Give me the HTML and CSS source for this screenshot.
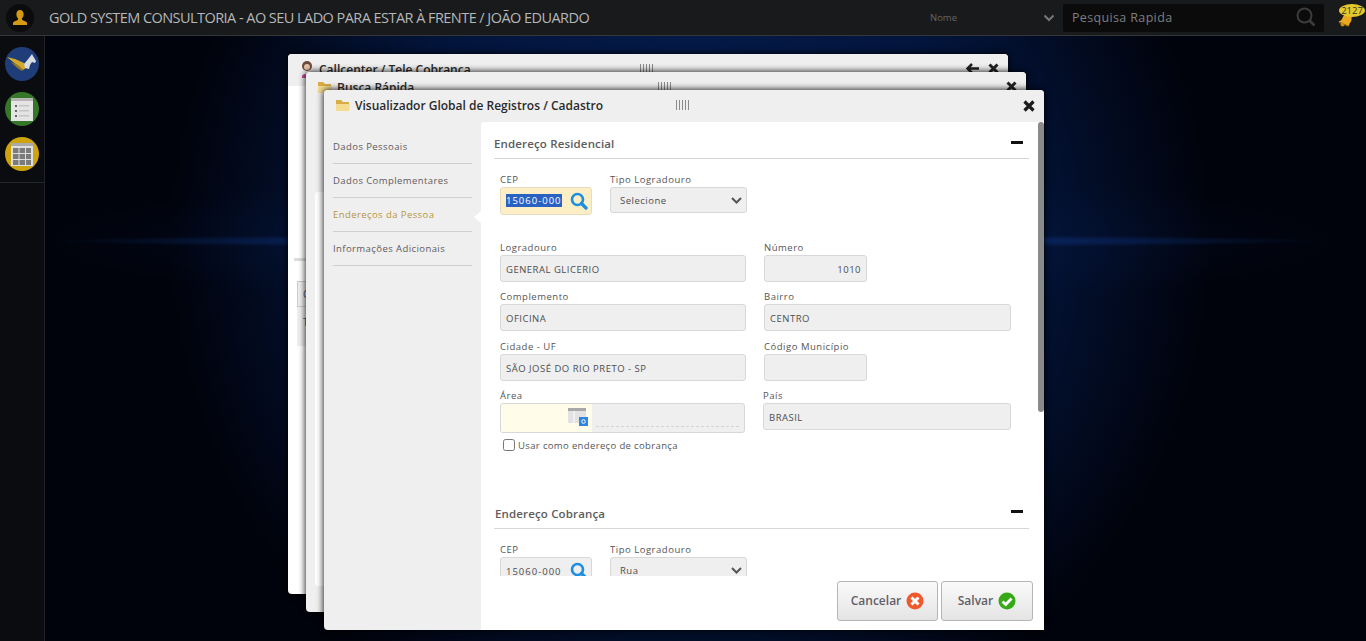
FILE: index.html
```html
<!DOCTYPE html>
<html>
<head>
    <meta http-equiv="Content-Type" content="text/html; charset=UTF-8">
    <title>Gold System</title>
    <link rel="stylesheet" href="styles.css">
</head>
<body>
<div class="topbar">
    <div class="avatar">
        <svg width="28" height="28" viewBox="0 0 28 28"><path d="M14 6c-2.400 0-3.600 2-3.600 4.200 0 1.800.7 3.200 1.600 4.200v1.400c-1.400 1-4 1.400-5 2.800v2.400h14v-2.400c-1-1.400-3.600-1.800-5-2.800v-1.400c.9-1 1.600-2.400 1.600-4.200C17.600 8 16.400 6 14 6z" fill="#d49a12"/></svg>
    </div>
    <div class="brand">GOLD SYSTEM CONSULTORIA - AO SEU LADO PARA ESTAR À FRENTE / JOÃO EDUARDO</div>
    <div class="filter">
        <span>Nome</span>
        <svg width="12" height="8" viewBox="0 0 12 8"><path d="M1.500 1.500 6 6l4.500-4.500" fill="none" stroke="#777" stroke-width="2"/></svg>
    </div>
    <div class="search">
        <span>Pesquisa Rapida</span>
        <svg width="20" height="20" viewBox="0 0 20 20"><circle cx="8.500" cy="8.500" r="7" fill="none" stroke="#3c3c3c" stroke-width="2"/><path d="M13.500 13.500 18.500 18.500" stroke="#3c3c3c" stroke-width="2.600"/></svg>
    </div>
    <div class="bell">
        <svg width="16" height="15" viewBox="0 0 16 15"><path d="M9 1C6 2 5 5 4 7 3 8.500 2 9 .5 9.500L11 14c0-2 1-3 2-4.500C14 7 14 4 12 2z" fill="#eaa820"/><path d="M1 10l10 4-1 .5L1 11z" fill="#b87a10"/><circle cx="4.500" cy="12.500" r="2" fill="#c98a16"/></svg>
        <span class="count">2127</span>
    </div>
</div>

<div class="desk">
    <div class="sidebar">
        <div class="dock">
            <div class="round blue">
                <svg width="30" height="20" viewBox="0 0 30 20"><path d="M0 3l8 2 9 4 2 5-3 2C11 12 5 7 0 3z" fill="#d3a92c"/><path d="M4 8l7 3 5 5-1 1C11 15 7 11 4 8z" fill="#8f7a2a"/><path d="M17 10l5-6 3-4 1 2 3 5-1 2-3-1-2 3-1 4-4-1z" fill="#d9dde2"/></svg>
            </div>
            <div class="round green">
                <svg width="22" height="23" viewBox="0 0 22 23"><rect width="22" height="23" fill="#e4e4e4"/><rect width="22" height="3" fill="#b5b5b5"/><path d="M4 7h2v2H4zM4 12h2v2H4zM4 17h2v2H4z" fill="#666"/><path d="M8 7h10v1.500H8zM8 12h10v1.500H8zM8 17h10v1.500H8z" fill="#c4c4c4"/></svg>
            </div>
            <div class="round gold">
                <svg width="22" height="23" viewBox="0 0 22 23"><rect width="22" height="23" fill="#dedede"/><rect width="22" height="3" fill="#aaa"/><path d="M2 5h5.500v5H2zM8.500 5H14v5H8.500zM15 5h5v5h-5zM2 11h5.500v5H2zM8.500 11H14v5H8.500zM15 11h5v5h-5zM2 17h5.500v5H2zM8.500 17H14v5H8.500zM15 17h5v5h-5z" fill="#7b7b7b"/></svg>
            </div>
        </div>
    </div>

    <div class="window win-back">
        <div class="win-title">
            <svg class="win-icon" width="16" height="18" viewBox="0 0 16 18"><circle cx="8" cy="6" r="5" fill="#6b4a3a"/><circle cx="8" cy="7" r="3" fill="#e6c3a8"/><path d="M3 16c1-3 9-3 10 0v2H3z" fill="#d24aa0"/></svg>
            <span>Callcenter / Tele Cobranca</span>
            <span class="grip"></span>
            <span class="tools">
                <svg width="13" height="11" viewBox="0 0 13 11"><path d="M6 1 1.500 5.500 6 10M2 5.500h11" fill="none" stroke="#222" stroke-width="2.500"/></svg>
                <svg width="11" height="11" viewBox="0 0 11 11"><path d="M1.500 1.500l8 8M9.500 1.500l-8 8" stroke="#222" stroke-width="3"/></svg>
            </span>
        </div>
        <div class="back-body">
            <div class="ghost-rule"></div>
            <div class="ghost-table"><div class="ghost-head">C</div><div class="ghost-row">T</div></div>
        </div>
    </div>

    <div class="window win-mid">
        <div class="win-title">
            <svg class="win-icon" width="16" height="14" viewBox="0 0 16 14"><path d="M1 2h5l2 2h6v9H1z" fill="#d9ac45"/><path d="M1 6h14l-1 7H1z" fill="#f3dc90"/></svg>
            <span>Busca Rápida</span>
            <span class="grip"></span>
            <span class="tools">
                <svg width="11" height="11" viewBox="0 0 11 11"><path d="M1.500 1.500l8 8M9.500 1.500l-8 8" stroke="#222" stroke-width="3"/></svg>
            </span>
        </div>
        <div class="mid-panel"></div>
    </div>

    <div class="window win-front">
        <div class="win-title">
            <svg class="win-icon" width="16" height="14" viewBox="0 0 16 14"><path d="M1 2h5l2 2h6v9H1z" fill="#d9ac45"/><path d="M1 6h14l-1 7H1z" fill="#f3dc90"/></svg>
            <span>Visualizador Global de Registros / Cadastro</span>
            <span class="grip"></span>
            <span class="tools">
                <svg width="12" height="12" viewBox="0 0 12 12"><path d="M1.500 1.500l9 9M10.500 1.500l-9 9" stroke="#1c1c1c" stroke-width="3.200"/></svg>
            </span>
        </div>
        <div class="win-body">
            <ul class="tabs">
                <li>Dados Pessoais</li>
                <li>Dados Complementares</li>
                <li class="on">Endereços da Pessoa</li>
                <li>Informações Adicionais</li>
            </ul>
            <div class="panel">
                <div class="scroll-area">
                    <div class="sec-head"><span>Endereço Residencial</span><i class="minus"></i></div>
                    <div class="row row-cep">
                        <div class="field w-cep">
                            <label>CEP</label>
                            <div class="box cep focus">
                                <span class="sel">15060-000</span>
                                <svg width="18" height="18" viewBox="0 0 18 18"><circle cx="7.500" cy="7.500" r="5.500" fill="none" stroke="#1e8fe0" stroke-width="2.600"/><path d="M11.500 11.500 16 16" stroke="#1e8fe0" stroke-width="3.400" stroke-linecap="round"/></svg>
                            </div>
                        </div>
                        <div class="field w-tipo">
                            <label>Tipo Logradouro</label>
                            <div class="box select"><span>Selecione</span><svg width="11" height="7" viewBox="0 0 11 7"><path d="M1 1l4.500 4.500L10 1" fill="none" stroke="#555" stroke-width="2"/></svg></div>
                        </div>
                    </div>
                    <div class="grid">
                        <div class="field"><label>Logradouro</label><div class="box">GENERAL GLICERIO</div></div>
                        <div class="field"><label>Número</label><div class="box small right">1010</div></div>
                        <div class="field"><label>Complemento</label><div class="box">OFICINA</div></div>
                        <div class="field"><label>Bairro</label><div class="box">CENTRO</div></div>
                        <div class="field"><label>Cidade - UF</label><div class="box">SÃO JOSÉ DO RIO PRETO - SP</div></div>
                        <div class="field"><label>Código Município</label><div class="box small"></div></div>
                        <div class="field">
                            <label>Área</label>
                            <div class="box area">
                                <div class="area-pick">
                                    <svg width="20" height="18" viewBox="0 0 20 18"><rect x="0" y="0" width="18" height="15" rx="1" fill="#e2e2e2"/><rect x="0" y="0" width="18" height="3" fill="#a8a8a8"/><path d="M6 3v12" stroke="#fff"/><rect x="11" y="9" width="9" height="9" fill="#2f86de"/><circle cx="15.500" cy="13.500" r="1.800" fill="none" stroke="#fff"/></svg>
                                </div>
                                <div class="area-text"></div>
                            </div>
                        </div>
                        <div class="field pais"><label>País</label><div class="box">BRASIL</div></div>
                    </div>
                    <label class="check"><input type="checkbox"> Usar como endereço de cobrança</label>

                    <div class="sec-head second"><span>Endereço Cobrança</span><i class="minus"></i></div>
                    <div class="row row-cep2">
                        <div class="field w-cep">
                            <label>CEP</label>
                            <div class="box cep">
                                <span class="plain">15060-000</span>
                                <svg width="18" height="18" viewBox="0 0 18 18"><circle cx="7.500" cy="7.500" r="5.500" fill="none" stroke="#1e8fe0" stroke-width="2.600"/><path d="M11.500 11.500 16 16" stroke="#1e8fe0" stroke-width="3.400" stroke-linecap="round"/></svg>
                            </div>
                        </div>
                        <div class="field w-tipo">
                            <label>Tipo Logradouro</label>
                            <div class="box select"><span>Rua</span><svg width="11" height="7" viewBox="0 0 11 7"><path d="M1 1l4.500 4.500L10 1" fill="none" stroke="#555" stroke-width="2"/></svg></div>
                        </div>
                    </div>
                </div>
                <div class="actions">
                    <div class="btn btn-cancel">Cancelar
                        <svg width="18" height="18" viewBox="0 0 18 18"><circle cx="9" cy="9" r="8.500" fill="#f0592b"/><path d="M5.500 5.500l7 7M12.500 5.500l-7 7" stroke="#fff" stroke-width="3"/></svg>
                    </div>
                    <div class="btn btn-save">Salvar
                        <svg width="18" height="18" viewBox="0 0 18 18"><circle cx="9" cy="9" r="8.500" fill="#36a916"/><path d="M4.500 9.500l3.200 3 5.800-6" fill="none" stroke="#fff" stroke-width="2.800"/></svg>
                    </div>
                </div>
                <div class="vbar"></div>
            </div>
        </div>
    </div>
</div>
</body>
</html>
```

FILE: styles.css
```css
* { box-sizing: border-box; }
html, body { height: 100%; }
body {
    margin: 0; overflow: hidden; height: 641px;
    display: flex; flex-direction: column;
    font-family: "Open Sans", "Liberation Sans", sans-serif;
    background: #010512;
}

/* barra do topo */
.topbar {
    height: 36px; flex: none; display: flex; align-items: center;
    background: #191a1b; border-bottom: 1px solid #34383a;
}
.avatar {
    width: 28px; height: 28px; flex: none; margin-left: 6px; border-radius: 50%;
    background: #0c0c0c;
}
.brand {
    margin-left: 15px; color: #b5b7b8; font-size: 14.500px; letter-spacing: -0.55px; white-space: nowrap;
    width: 881px; flex: none;
}
.filter {
    width: 133px; flex: none; display: flex; justify-content: space-between; align-items: center;
    color: #666; font-size: 9.500px; padding-right: 8px;
}
.search {
    width: 261px; height: 28px; flex: none; margin-left: 0; padding: 0 8px 1px 9px; border-radius: 2px;
    background: #0b0b0c; display: flex; justify-content: space-between; align-items: center;
    color: #7b7f80; font-size: 12.500px; letter-spacing: .35px;
}
.bell { position: relative; width: 30px; height: 28px; flex: none; margin-left: 13px; }
.bell svg { position: absolute; left: 1px; top: 8px; }
.count {
    position: absolute; left: 2px; top: 0; width: 26px; height: 13px; border-radius: 50%;
    background: #e3c82a; color: #333; font-size: 9.500px; line-height: 13px; text-align: center;
}

/* area de trabalho */
.desk {
    flex: 1; display: flex; position: relative; overflow: hidden;
    background:
        radial-gradient(ellipse 640px 7px at 690px 205px, rgba(18,62,150,.9) 0%, rgba(12,44,110,.55) 60%, rgba(2,10,30,0) 100%),
        radial-gradient(ellipse 640px 70px at 690px 205px, rgba(6,30,80,.45) 0%, rgba(2,10,30,0) 100%),
        radial-gradient(ellipse 520px 520px at 690px 205px, #062058 0%, #03143a 62%, rgba(1,5,18,0) 100%),
        #01030c;
}
.sidebar { width: 45px; flex: none; background: #0a0c0f; border-right: 1px solid #202428; }
.dock { height: 147px; padding-top: 11px; border-bottom: 1px solid #24282b; }
.round {
    width: 34px; height: 34px; margin: 0 0 11px 5px; border-radius: 50%;
    display: flex; align-items: center; justify-content: center;
}
.round.blue { background: #1f3e79; }
.round.green { background: #357629; }
.round.gold { background: #cea40e; }
.round svg { display: block; }

/* janelas */
.window {
    position: absolute; width: 720px; height: 540px; background: #fff;
    border-radius: 4px; box-shadow: 0 0 6px 1px rgba(0,0,0,.8);
}
.win-back { left: 288px; top: 18px; }
.win-mid { left: 306px; top: 36px; background: #efefef; }
.win-front { left: 324px; top: 54px; display: flex; flex-direction: column; background: #efefef; }
.win-title {
    height: 32px; flex: none; display: flex; align-items: center; padding: 0 0 2px 11px; position: relative;
    background: #efefef; color: #2a2a2a; font-size: 12px; font-weight: 600;
    border-radius: 4px 4px 0 0;
}
.win-icon { margin-right: 4px; }
.grip {
    position: absolute; left: 352px; top: 10px; width: 15px; height: 10px;
    background: repeating-linear-gradient(90deg, #8b8b8b 0 1px, transparent 1px 3px);
}
.tools { position: absolute; right: 9px; top: 10px; display: flex; gap: 9px; }
.win-back .tools { top: 9px; right: 9px; }
.win-mid .tools { top: 9px; }
.mid-panel { position: absolute; left: 9px; right: 0; top: 120px; height: 394px; background: #fff; border-radius: 3px; }
.back-body { position: relative; }
.ghost-rule { position: absolute; left: 6px; right: 0; top: 172px; height: 3px; background: #dcdcdc; }
.ghost-table {
    position: absolute; left: 9px; top: 195px; width: 40px; height: 65px;
    background: #efefef; color: #555; font-size: 10px;
}
.ghost-head { height: 26px; line-height: 24px; padding-left: 5px; border: 1px solid #ccc; }
.ghost-row { padding: 8px 6px; }

.win-body { flex: 1; display: flex; min-height: 0; }
.tabs { width: 157px; flex: none; margin: 0; padding: 8px 9px 0 9px; list-style: none; font-size: 9.500px; letter-spacing: .42px; color: #5f5a60; }
.tabs li { height: 34px; line-height: 33px; border-bottom: 1px solid #cfcfcf; }
.tabs li.on { color: #b8963c; position: relative; }
.tabs li.on:after {
    content: ""; position: absolute; right: -9px; top: 13px;
    border: 6px solid transparent; border-right: 7px solid #fff; border-left: 0;
}

.panel { flex: 1; background: #fff; position: relative; border-radius: 3px 0 0 0; display: flex; flex-direction: column; min-width: 0; }
.scroll-area { height: 454px; overflow: hidden; flex: none; padding: 0 15px 0 13px; }
.sec-head {
    height: 37px; padding: 14px 6px 0 0; display: flex; justify-content: space-between; align-items: flex-start;
    border-bottom: 1px solid #d6d6d6; font-size: 11.500px; font-weight: 600; color: #5c5c5c; letter-spacing: .15px;
}
.sec-head.second { margin-top: 41px; height: 36px; padding-top: 13px; }
.sec-head.second span { margin-left: 1px; }
.minus { width: 12px; height: 3px; margin-top: 5px; background: #111; }
.sec-head.second .minus { margin-top: 4px; }

.row { display: flex; gap: 18px; padding-left: 6px; }
.row-cep { margin-top: 14px; height: 68px; }
.row-cep2 { margin-top: 14px; }
.field label { display: block; height: 14px; font-size: 9.500px; line-height: 14px; color: #555; letter-spacing: .52px; }
.w-cep { width: 92px; }
.w-tipo { width: 137px; }
.box {
    height: 27px; padding: 0 5px; line-height: 27px; border: 1px solid #d8d8d8; border-radius: 3px;
    background: #efefef; color: #4e4e4e; font-size: 9.500px; letter-spacing: .5px; white-space: nowrap;
}
.box.small { width: 103px; }
.box.right { text-align: right; }
.cep { height: 28px; padding: 0 3px 0 5px; display: flex; align-items: center; justify-content: space-between; letter-spacing: 1px; }
.cep.focus { background: #fdeec5; border-color: #e6dcc0; }
.sel { background: #2a62c4; color: #fff; line-height: 13px; margin-top: -1px; }
.plain { color: #4e4e4e; margin-top: 2px; }
.select { height: 26px; padding: 1px 4px 0 9px; display: flex; align-items: center; justify-content: space-between; }

.grid { display: grid; grid-template-columns: 246px 247px; column-gap: 18px; row-gap: 8.330px; padding-left: 6px; }
.grid .field { height: 41px; }
.area { width: 245px; height: 30px; padding: 0; display: flex; overflow: hidden; }
.area-pick { width: 91px; background: #fffcea; padding: 4px 3px 0 67px; }
.area-text { flex: 1; margin: 22px 5px 0 4px; border-top: 1px dashed #d4d4d4; }
.pais { margin-left: -1px; }
.check { display: flex; align-items: center; gap: 3px; margin: 0 0 0 9px; padding-top: 9px; font-size: 9.500px; color: #555; letter-spacing: .36px; }
.check input { margin: 0; width: 12px; height: 12px; }

.actions { flex: 1; display: flex; justify-content: flex-end; gap: 3px; padding: 5px 11px 0 0; }
.btn {
    height: 40px; padding-bottom: 2px; display: flex; align-items: center; justify-content: center; gap: 5px;
    border: 1px solid #b5b5b5; border-radius: 3px; background: linear-gradient(#fafafa, #e4e4e4);
    font-size: 12px; font-weight: 600; color: #5e6068;
}
.btn svg { margin-top: 2px; }
.btn-cancel { width: 101px; }
.btn-save { width: 92px; }
.vbar { position: absolute; right: 0; top: 0; width: 6px; height: 290px; background: #8a8a8a; border-radius: 3px; }
```
